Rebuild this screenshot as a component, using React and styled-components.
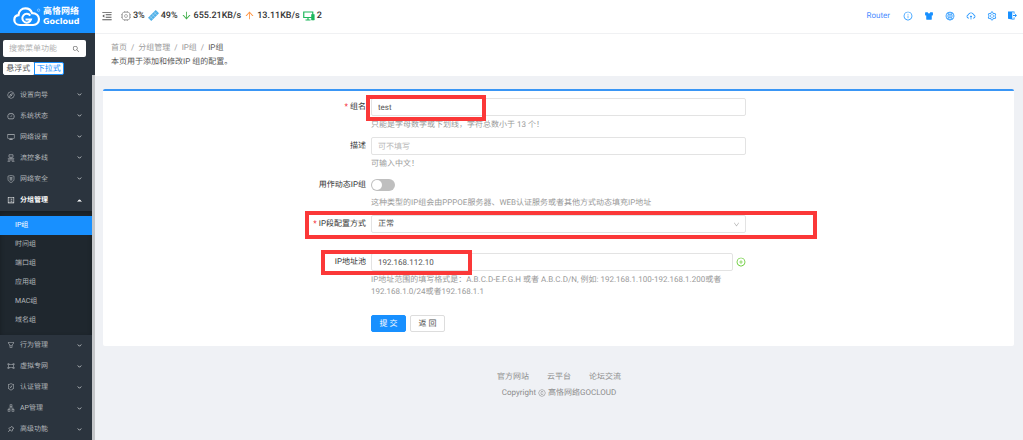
import React, { useState } from 'react';
import styled, { createGlobalStyle } from 'styled-components';
import {
    AiFillSkin,
    AiOutlineApartment,
    AiOutlineArrowDown,
    AiOutlineArrowUp,
    AiOutlineCloudUpload,
    AiOutlineCompass,
    AiOutlineCopyrightCircle,
    AiOutlineDashboard,
    AiOutlineDesktop,
    AiOutlineDown,
    AiOutlineFilter,
    AiOutlineGateway,
    AiOutlineGlobal,
    AiOutlineInfoCircle,
    AiOutlineMenuFold,
    AiOutlinePlusCircle,
    AiOutlineProfile,
    AiOutlinePushpin,
    AiOutlineSafetyCertificate,
    AiOutlineSearch,
    AiOutlineSetting,
} from 'react-icons/ai';

const GlobalStyle = createGlobalStyle`
    * {
        box-sizing: border-box;
    }

    body {
        margin: 0;
        background: #eff1f5;
        color: #555;
        font-family: Roboto, "Noto Sans CJK SC", sans-serif;
        font-size: 8px;
        line-height: 12px;
        text-rendering: geometricPrecision;
    }

    input, select, button {
        font: inherit;
        color: inherit;
        margin: 0;
        text-rendering: inherit;
    }

    a {
        color: inherit;
        text-decoration: none;
    }

    svg {
        display: block;
        flex: none;
    }
`;

/* icons that the icon set does not have */

const LogoIcon = () => (
    <svg width="28" height="20" viewBox="0 0 28 20" fill="none" stroke="#fff">
        <path d="M7 18C3.800 18 1.300 15.800 1.300 12.900c0-2.500 1.800-4.400 4.200-4.700C5.800 4.300 8.700 1.400 12.400 1.400c3.200 0 5.700 1.900 6.700 4.700 3.900 0 6.900 2.500 6.900 6 0 3.400-2.500 5.900-5.900 5.900z" strokeWidth="2.200" />
        <path d="M17.300 8.600A4.400 4.400 0 1 0 18 12.400H12.500" strokeWidth="2" />
        <circle cx="25.600" cy="3.200" r="1.200" strokeWidth=".6" opacity=".7" />
    </svg>
);

const CpuIcon = () => (
    <svg width="10" height="10" viewBox="0 0 20 20" fill="none" stroke="#999" strokeWidth="1.500">
        <rect x="2.500" y="2.500" width="15" height="15" rx="3.500" />
        <circle cx="10" cy="10" r="3" />
        <path d="M7 0v3M10 0v3M13 0v3M7 17v3M10 17v3M13 17v3M0 7h3M0 10h3M0 13h3M17 7h3M17 10h3M17 13h3" />
    </svg>
);

const MemoryIcon = () => (
    <svg width="11" height="11" viewBox="0 0 22 22">
        <path d="M0 15.500 15.500 0l6.500 6.500L6.500 22z" fill="#4fb0e8" />
        <path d="M3.500 17.500 17.500 3.500" stroke="#b9e0f6" strokeWidth="1" />
        <path d="M4 12.500l5.500 5.500M8 8.500l5.500 5.500M12 4.500l5.500 5.500" stroke="#d4ecfa" strokeWidth="1" />
    </svg>
);

const ClientsIcon = () => (
    <svg width="12" height="10" viewBox="0 0 24 20" fill="none" stroke="#1fb85c" strokeWidth="2.400">
        <path d="M1.500 2h18v11h-18zM10 13v4M5 18h10" />
        <path d="M17 7h5.500v11H17z" fill="#1fb85c" strokeWidth="1.200" />
    </svg>
);

const ExitIcon = () => (
    <svg width="9" height="9" viewBox="0 0 18 18" fill="currentColor">
        <path d="M0 1h8.500v16L0 15.500z" />
        <path d="M8 1h5v4.500h-1.600V2.600H8zM8 15.400h3.400v-2.900H13V17H8z" />
        <path d="M10 8h4V5.500L18 9l-4 3.500V10h-4z" />
    </svg>
);

const LinesIcon = () => (
    <svg width="8" height="8" viewBox="0 0 16 16" fill="none" stroke="currentColor" strokeWidth="1.300">
        <path d="M4 1.500h8v5H4zM8 6.500v8M1.500 9.500h13M4 9.500v5M12 9.500v5M1 14.500h5M10 14.500h5" />
    </svg>
);

const ShieldIcon = () => (
    <svg width="8" height="8" viewBox="0 0 16 16" fill="none" stroke="currentColor" strokeWidth="1.200">
        <path d="M2 2.200 8 1l6 1.200v6.300c0 3-2.500 5-6 6.700-3.500-1.700-6-3.700-6-6.700z" />
        <path d="M5 5h6M5 7.500h6M5 10h6M8 5v5" />
    </svg>
);

const menu = [
    { name: '设置向导', icon: AiOutlineCompass },
    { name: '系统状态', icon: AiOutlineDashboard },
    { name: '网络设置', icon: AiOutlineDesktop },
    { name: '流控多线', icon: LinesIcon },
    { name: '网络安全', icon: ShieldIcon },
    {
        name: '分组管理',
        icon: AiOutlineProfile,
        items: ['IP组', '时间组', '端口组', '应用组', 'MAC组', '域名组'],
    },
    { name: '行为管理', icon: AiOutlineFilter },
    { name: '虚拟专网', icon: AiOutlineGateway },
    { name: '认证管理', icon: AiOutlineSafetyCertificate },
    { name: 'AP管理', icon: AiOutlineApartment },
    { name: '高级功能', icon: AiOutlinePushpin },
];

const Sidebar = () => (
    <Side>
        <Logo href="#">
            <LogoIcon />
            <LogoText>
                <Brand>高恪网络</Brand>
                <BrandLatin>Gocloud</BrandLatin>
            </LogoText>
        </Logo>
        <Search>
            <SearchInput aria-label="搜索菜单功能" placeholder="搜索菜单功能" />
            <AiOutlineSearch size={8} />
        </Search>
        <Modes>
            <Mode type="button">悬浮式</Mode>
            <Mode type="button" $active>下拉式</Mode>
        </Modes>
        <MenuArea>
            <Menu>
                {menu.map(({ name, icon: Icon, items }) => (
                    <React.Fragment key={name}>
                        <MenuRow type="button" $open={!!items}>
                            <MenuIcon><Icon /></MenuIcon>
                            <MenuName>{name}</MenuName>
                            <Chevron $up={!!items} viewBox="0 0 10 10">
                                <path d="M1.500 3 5 6.500 8.500 3" />
                            </Chevron>
                        </MenuRow>
                        {items && (
                            <SubMenu>
                                {items.map((item, i) => (
                                    <SubItem key={item} href="#" $active={i === 0}>{item}</SubItem>
                                ))}
                            </SubMenu>
                        )}
                    </React.Fragment>
                ))}
            </Menu>
            <Scrollbar />
        </MenuArea>
    </Side>
);

const Header = () => (
    <TopBar>
        <IconButton type="button" aria-label="收起菜单"><AiOutlineMenuFold size={12} /></IconButton>
        <Stats>
            <Stat><CpuIcon />3%</Stat>
            <Stat><MemoryIcon />49%</Stat>
            <Stat $color="#3fae49"><AiOutlineArrowDown size={11} /><span>655.21KB/s</span></Stat>
            <Stat $color="#ff9440"><AiOutlineArrowUp size={11} /><span>13.11KB/s</span></Stat>
            <Stat><ClientsIcon />2</Stat>
        </Stats>
        <Tools>
            <a href="#">Router</a>
            <IconButton type="button" aria-label="信息"><AiOutlineInfoCircle size={10} /></IconButton>
            <IconButton type="button" aria-label="主题"><AiFillSkin size={10} /></IconButton>
            <IconButton type="button" aria-label="语言"><AiOutlineGlobal size={10} /></IconButton>
            <IconButton type="button" aria-label="升级"><AiOutlineCloudUpload size={10} /></IconButton>
            <IconButton type="button" aria-label="设置"><AiOutlineSetting size={10} /></IconButton>
            <IconButton type="button" aria-label="退出"><ExitIcon /></IconButton>
        </Tools>
    </TopBar>
);

const GroupForm = () => {
    const [name, setName] = useState('test');
    const [pool, setPool] = useState('192.168.112.10');

    return (
        <Card onSubmit={e => e.preventDefault()}>
            <Row>
                <Label htmlFor="name" $required>组名</Label>
                <Control>
                    <Input id="name" value={name} onChange={e => setName(e.target.value)} />
                    <Hint>只能是字母数字或下划线，字符总数小于 13 个！</Hint>
                    <Mark $left={-5} $top={-3} $width={120} $height={26} />
                </Control>
            </Row>
            <Row>
                <Label htmlFor="desc">描述</Label>
                <Control>
                    <Input id="desc" placeholder="可不填写" />
                    <Hint>可输入中文！</Hint>
                </Control>
            </Row>
            <Row>
                <Label htmlFor="dynamic">用作动态IP组</Label>
                <Control>
                    <Line><Switch id="dynamic" type="checkbox" role="switch" /></Line>
                    <Hint>这种类型的IP组会由PPPOE服务器、WEB认证服务或者其他方式动态填充IP地址</Hint>
                </Control>
            </Row>
            <Row $bare>
                <Label htmlFor="mode" $required>IP段配置方式</Label>
                <Control>
                    <SelectBox>
                        <Select id="mode" defaultValue="normal">
                            <option value="normal">正常</option>
                        </Select>
                        <AiOutlineDown size={7} />
                    </SelectBox>
                    <Mark $left={-66} $top={-4} $width={512} $height={28} />
                </Control>
            </Row>
            <Row>
                <Label htmlFor="pool">IP地址池</Label>
                <Control>
                    <Line>
                        <Input id="pool" value={pool} onChange={e => setPool(e.target.value)} />
                        <AddButton type="button" aria-label="添加"><AiOutlinePlusCircle size={10} /></AddButton>
                    </Line>
                    <Hint>IP地址范围的填写格式是：A.B.C.D-E.F.G.H 或者 A.B.C.D/N, 例如: 192.168.1.100-192.168.1.200或者192.168.1.0/24或者192.168.1.1</Hint>
                    <Mark $left={-50} $top={-3} $width={151} $height={25} />
                </Control>
            </Row>
            <Row>
                <Actions>
                    <Button type="submit" $primary>提 交</Button>
                    <Button type="button">返 回</Button>
                </Actions>
            </Row>
        </Card>
    );
};

export default function App() {
    return (
        <Page>
            <GlobalStyle />
            <Sidebar />
            <Main>
                <Header />
                <PageHead>
                    <Crumbs>
                        <a href="#">首页</a><i>/</i>
                        <a href="#">分组管理</a><i>/</i>
                        <a href="#">IP组</a><i>/</i>
                        <b>IP组</b>
                    </Crumbs>
                    <div>本页用于添加和修改IP 组的配置。</div>
                </PageHead>
                <GroupForm />
                <Footer>
                    <FooterLinks>
                        <a href="#">官方网站</a>
                        <a href="#">云平台</a>
                        <a href="#">论坛交流</a>
                    </FooterLinks>
                    <Copyright>Copyright <AiOutlineCopyrightCircle size={8} /> 高恪网络GOCLOUD</Copyright>
                </Footer>
            </Main>
        </Page>
    );
}

const Page = styled.div`
    display: flex;
    height: 100vh;
    overflow: hidden;
`;

const Side = styled.aside`
    display: flex;
    flex-direction: column;
    flex: none;
    width: 95px;
    background: #2b343e;
`;

const Logo = styled.a`
    display: flex;
    align-items: center;
    gap: 2px;
    height: 33px;
    padding-left: 13px;
    background: #1890ff;
    color: #fff;
`;

const LogoText = styled.div`
    display: flex;
    flex-direction: column;
    font-weight: 700;
    line-height: 9px;
    white-space: nowrap;
`;

const Brand = styled.span`
    font-size: 9px;
`;

const BrandLatin = styled.span`
    font-family: "DejaVu Sans", sans-serif;
    font-size: 8px;
`;

const Search = styled.div`
    display: flex;
    align-items: center;
    height: 17px;
    margin: 7px 9px 5px 3px;
    padding: 0 6px;
    border-radius: 2px;
    background: #fff;
    color: #555;
`;

const SearchInput = styled.input`
    flex: 1;
    min-width: 0;
    padding: 0;
    border: 0;
    outline: 0;
    background: none;

    &::placeholder {
        color: #b0b0b0;
    }
`;

const Modes = styled.div`
    display: flex;
    margin: 0 31px 0 3px;
`;

const Mode = styled.button`
    flex: 1;
    height: 13px;
    padding: 0;
    border: 1px solid ${props => props.$active ? '#1890ff' : '#fff'};
    border-radius: ${props => props.$active ? '0 2px 2px 0' : '2px 0 0 2px'};
    background: #fff;
    color: ${props => props.$active ? '#1890ff' : '#555'};
    line-height: 10px;
    white-space: nowrap;
`;

const MenuArea = styled.div`
    display: flex;
    flex: 1;
    min-height: 0;
`;

const Menu = styled.nav`
    display: flex;
    flex: 1;
    flex-direction: column;
    padding-top: 9px;
`;

const Scrollbar = styled.div`
    width: 3px;
    background: #c4c6c9;
`;

const MenuRow = styled.button`
    display: flex;
    flex: 1 1 21px;
    align-items: center;
    max-height: 22px;
    padding: 0 10px 0 7px;
    border: 0;
    background: none;
    color: ${props => props.$open ? '#fff' : '#b4b8bc'};
    font-size: 7px;
    font-weight: ${props => props.$open ? 700 : 400};
`;

const MenuIcon = styled.span`
    svg {
        width: 8px;
        height: 8px;
    }
`;

const MenuName = styled.span`
    flex: 1;
    padding-left: 5px;
    text-align: left;
`;

const Chevron = styled.svg`
    width: 5px;
    height: 5px;
    fill: ${props => props.$up ? 'currentColor' : 'none'};
    stroke: currentColor;
    stroke-width: 2;
    transform: ${props => props.$up ? 'rotate(180deg)' : 'none'};
`;

const SubMenu = styled.div`
    flex: none;
    padding: 5px 0;
    background: #1f272e;
    box-shadow: inset 0 2px 4px #171d22;
`;

const SubItem = styled.a`
    display: block;
    height: 19px;
    padding-left: 15px;
    background: ${props => props.$active ? '#1890ff' : 'none'};
    color: ${props => props.$active ? '#fff' : '#b4b8bc'};
    font-size: 7px;
    line-height: 19px;
`;

const Main = styled.main`
    flex: 1;
    min-width: 0;
    overflow: auto;
`;

const TopBar = styled.header`
    display: flex;
    align-items: center;
    height: 34px;
    padding: 0 6px 2px;
    border-bottom: 1px solid #f0f1f3;
    background: #fff;
`;

const IconButton = styled.button`
    display: flex;
    padding: 0;
    border: 0;
    background: none;
    cursor: pointer;
`;

const Stats = styled.div`
    display: flex;
    gap: 3px;
    margin-left: 8px;
`;

const Stat = styled.span`
    display: flex;
    align-items: center;
    gap: 2px;
    color: ${props => props.$color || '#333'};
    font-size: 9px;
    font-weight: 500;

    span {
        color: #333;
    }
`;

const Tools = styled.div`
    display: flex;
    align-items: center;
    gap: 11px;
    margin-left: auto;
    color: #1890ff;

    a {
        margin-right: 2px;
        color: #4c8dff;
    }
`;

const PageHead = styled.div`
    padding: 7px 16px 7px;
    background: #fff;
    line-height: 14px;
`;

const Crumbs = styled.nav`
    color: #999;

    i {
        margin: 0 4px;
        font-style: normal;
    }

    b {
        color: #555;
        font-weight: 400;
    }
`;

const Card = styled.form`
    margin: 13px 9px 0 8px;
    padding: 7px 0 14px;
    border-top: 2px solid #3a96f5;
    border-radius: 2px;
    background: #fff;
`;

const Row = styled.div`
    display: grid;
    grid-template-columns: 268fr 375fr 268fr;
    margin-bottom: ${props => props.$bare ? 20 : 6}px;

    &:last-child {
        margin: 17px 0 0;
    }
`;

const Label = styled.label`
    padding-right: 5px;
    color: #333;
    line-height: 18px;
    text-align: right;

    &::before {
        content: ${props => props.$required ? '"*"' : 'none'};
        margin-right: 2px;
        color: #f5222d;
    }
`;

const Control = styled.div`
    position: relative;
    min-width: 0;
`;

const Line = styled.div`
    display: flex;
    align-items: center;
    height: 18px;
`;

const Input = styled.input`
    display: block;
    width: 100%;
    height: 18px;
    padding: 0 6px;
    border: 1px solid #e3e3e3;
    border-radius: 2px;
    outline: 0;
    background: #fff;

    &::placeholder {
        color: #b8b8b8;
    }
`;

const Hint = styled.div`
    padding-top: 3px;
    color: #999;
`;

const Switch = styled.input`
    appearance: none;
    width: 24px;
    height: 12px;
    border-radius: 6px;
    background: #bfbfbf;

    &::before {
        content: '';
        display: block;
        width: 10px;
        height: 10px;
        margin: 1px;
        border-radius: 50%;
        background: #fff;
    }

    &:checked {
        background: #1890ff;
    }

    &:checked::before {
        margin-left: 13px;
    }
`;

const SelectBox = styled.div`
    display: grid;
    align-items: center;

    > * {
        grid-area: 1 / 1;
    }

    svg {
        justify-self: end;
        margin-right: 6px;
        color: #aaa;
        pointer-events: none;
    }
`;

const Select = styled.select`
    appearance: none;
    width: 100%;
    height: 18px;
    padding: 0 6px;
    border: 1px solid #e3e3e3;
    border-radius: 2px;
    background: #fff;
`;

const AddButton = styled(IconButton)`
    padding-left: 3px;
    color: #52c41a;
`;

const Mark = styled.div`
    position: absolute;
    left: ${props => props.$left}px;
    top: ${props => props.$top}px;
    width: ${props => props.$width}px;
    height: ${props => props.$height}px;
    border: 4px solid #fb3838;
    pointer-events: none;
`;

const Actions = styled.div`
    display: flex;
    grid-column: 2;
    gap: 4px;
`;

const Button = styled.button`
    width: 35px;
    height: 17px;
    padding: 0;
    border: 1px solid ${props => props.$primary ? '#1890ff' : '#ddd'};
    border-radius: 2px;
    background: ${props => props.$primary ? '#1890ff' : '#fff'};
    color: ${props => props.$primary ? '#fff' : '#555'};
`;

const Footer = styled.footer`
    display: flex;
    flex-direction: column;
    align-items: center;
    gap: 4px;
    padding: 25px 0;
    color: #8c8c8c;
`;

const FooterLinks = styled.div`
    display: flex;
    gap: 18px;
`;

const Copyright = styled.div`
    display: flex;
    align-items: center;
    gap: 2px;
`;
